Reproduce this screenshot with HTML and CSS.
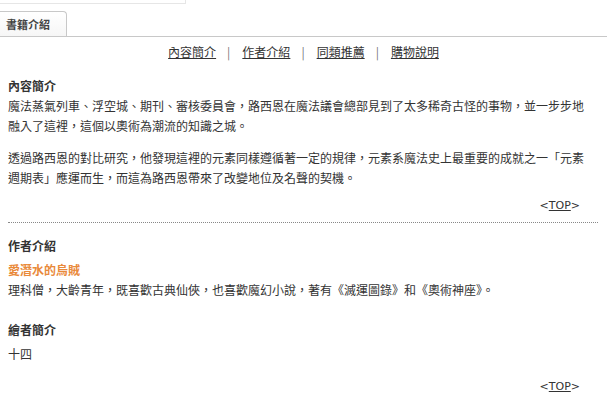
FILE: index.html
```html
<!DOCTYPE html>
<html lang="zh-Hant">
<head>
    <meta charset="UTF-8">
    <title>書籍介紹</title>
    <link rel="stylesheet" href="styles.css">
</head>
<body>

    <div class="top-bar"></div>

    <!-- 分頁標籤 -->
    <div class="tabs">
        <div class="tab">書籍介紹</div>
    </div>

    <!-- 頁內導覽 -->
    <div class="nav">
        <a href="#intro">內容簡介</a><span class="sep">|</span><a href="#author">作者介紹</a><span class="sep">|</span><a href="#same">同類推薦</a><span class="sep">|</span><a href="#buy">購物說明</a>
    </div>

    <div class="content">
        <div class="section" id="intro">
            <h4 class="title">內容簡介</h4>
            <p>魔法蒸氣列車、浮空城、期刊、審核委員會，路西恩在魔法議會總部見到了太多稀奇古怪的事物，並一步步地融入了這裡，這個以奧術為潮流的知識之城。</p>
            <p class="gap">透過路西恩的對比研究，他發現這裡的元素同樣遵循著一定的規律，元素系魔法史上最重要的成就之一「元素週期表」應運而生，而這為路西恩帶來了改變地位及名聲的契機。</p>
            <div class="to-top">&lt;<a href="#">TOP</a>&gt;</div>
        </div>

        <div class="section dotted" id="author">
            <h4 class="title">作者介紹</h4>
            <div class="name">愛潛水的烏賊</div>
            <p>理科僧，大齡青年，既喜歡古典仙俠，也喜歡魔幻小說，著有《滅運圖錄》和《奧術神座》。</p>
            <h4 class="title next">繪者簡介</h4>
            <p class="after-title">十四</p>
            <div class="to-top last">&lt;<a href="#">TOP</a>&gt;</div>
        </div>
    </div>

</body>
</html>
```

FILE: styles.css
```css
body {
    margin: 0;
    font-family: "Noto Sans CJK TC", "Liberation Sans", sans-serif;
    font-size: 12px;
    color: #333;
    background-color: #fff;
}

.top-bar {
    width: 185px;
    height: 3px;
    border-bottom: 1px solid #e6e6e6;
    border-right: 1px solid #e6e6e6;
}

.tabs {
    margin-top: 7px;
    border-bottom: 1px solid #c8c8c8;
    height: 25px;
}

.tab {
    width: 60px;
    height: 24px;
    padding-left: 6px;
    border: 1px solid #c8c8c8;
    border-left: none;
    border-bottom: none;
    border-top-right-radius: 4px;
    background: linear-gradient(#fff, #f6f6f6);
    font-size: 11px;
    font-weight: bold;
    line-height: 25px;
    color: #444;
}

.nav {
    margin-top: 5px;
    line-height: 20px;
    text-align: center;
}

.nav a {
    color: #333;
    text-decoration: underline;
}

.sep {
    color: #777;
    margin: 0 12px 0 11px;
}

.content {
    padding: 0 9px 0 8px;
}

.section p {
    margin: 0;
    padding-right: 8px;
    line-height: 20px;
}

.title {
    margin: 14px 0 0;
    font-size: 12px;
    line-height: 20px;
    font-weight: bold;
    color: #333;
}

.gap {
    margin-top: 12px !important;
}

.to-top {
    margin-top: 8px;
    padding-right: 18px;
    line-height: 20px;
    text-align: right;
    font-family: "DejaVu Sans", sans-serif;
    font-size: 11px;
}

.to-top a {
    color: #333;
    text-decoration: underline;
}

.dotted {
    border-top: 1px dotted #888;
    margin-top: 6px;
}

.dotted .title {
    margin-top: 13px;
}

.name {
    margin-top: 4px;
    line-height: 20px;
    font-weight: bold;
    color: #e98a3b;
}

.dotted .next {
    margin-top: 20px;
}

.after-title {
    margin-top: 4px !important;
}

.last {
    margin-top: 13px;
}
```
